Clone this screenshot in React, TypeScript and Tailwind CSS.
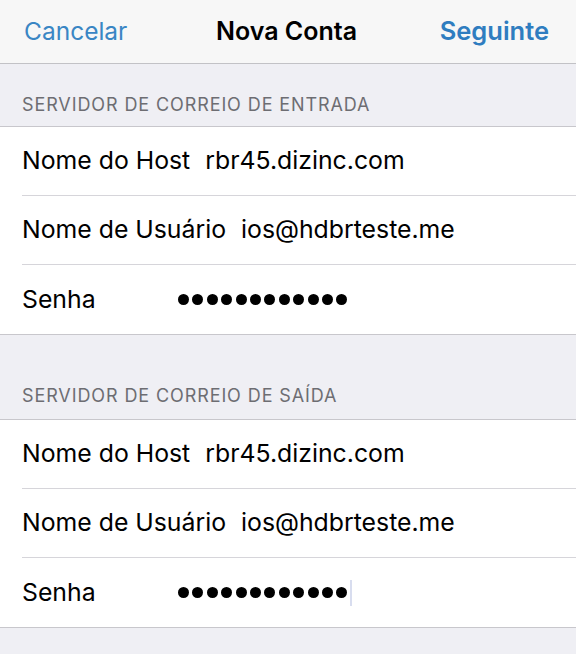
import React from "react";

type Row = { label: string; value: string; password?: boolean; caret?: boolean };

const sections: { title: string; rows: Row[] }[] = [
  {
    title: "SERVIDOR DE CORREIO DE ENTRADA",
    rows: [
      { label: "Nome do Host", value: "rbr45.dizinc.com" },
      { label: "Nome de Usuário", value: "ios@hdbrteste.me" },
      { label: "Senha", value: "", password: true },
    ],
  },
  {
    title: "SERVIDOR DE CORREIO DE SAÍDA",
    rows: [
      { label: "Nome do Host", value: "rbr45.dizinc.com" },
      { label: "Nome de Usuário", value: "ios@hdbrteste.me" },
      { label: "Senha", value: "", password: true, caret: true },
    ],
  },
];

function Dots({ caret }: { caret?: boolean }) {
  return (
    <div className="flex items-center gap-[3.4px]">
      {Array.from({ length: 12 }).map((_, i) => (
        <span key={i} className="w-[11px] h-[11px] rounded-full bg-black" />
      ))}
      {caret && <span className="ml-[-1px] w-[2px] h-[26px] bg-[#d8ddef]" />}
    </div>
  );
}

function Section({ title, rows, first }: { title: string; rows: Row[]; first?: boolean }) {
  return (
    <div>
      <div
        className={`flex items-end px-[22px] text-[18px] tracking-[0.9px] text-[#6d6d72] ${
          first ? "h-[62px] pb-[8px]" : "h-[84px] pb-[10px]"
        }`}
      >
        {title}
      </div>
      <div className="bg-white border-y border-[#c8c7cc]">
        {rows.map((row, i) => (
          <div key={i} className="pl-[22px]">
            <div
              className={`flex items-center h-[69px] text-[24.8px] text-black ${
                i < rows.length - 1 ? "border-b border-[#d6d5da]" : ""
              }`}
            >
              {row.password ? (
                <>
                  <span className="w-[156px]">{row.label}</span>
                  <Dots caret={row.caret} />
                </>
              ) : (
                <>
                  <span>{row.label}</span>
                  <span className="ml-[15px]">{row.value}</span>
                </>
              )}
            </div>
          </div>
        ))}
      </div>
    </div>
  );
}

export default function App() {
  return (
    <div
      className="w-[576px] h-[654px] bg-[#efeff4] overflow-hidden"
      style={{ fontFamily: "Inter, 'Noto Sans', sans-serif" }}
    >
      <div className="grid grid-cols-[1fr_auto_1fr] items-center h-[64px] pl-[24px] pr-[27px] bg-[#f7f7f7] border-b border-[#c2c2c6]">
        <span className="text-[24.5px] text-[#3a86c4]">Cancelar</span>
        <span className="text-[25px] font-semibold text-black">Nova Conta</span>
        <span className="text-right text-[25.5px] font-semibold text-[#2f7dc0]">Seguinte</span>
      </div>
      <Section first title={sections[0].title} rows={sections[0].rows} />
      <Section title={sections[1].title} rows={sections[1].rows} />
    </div>
  );
}
